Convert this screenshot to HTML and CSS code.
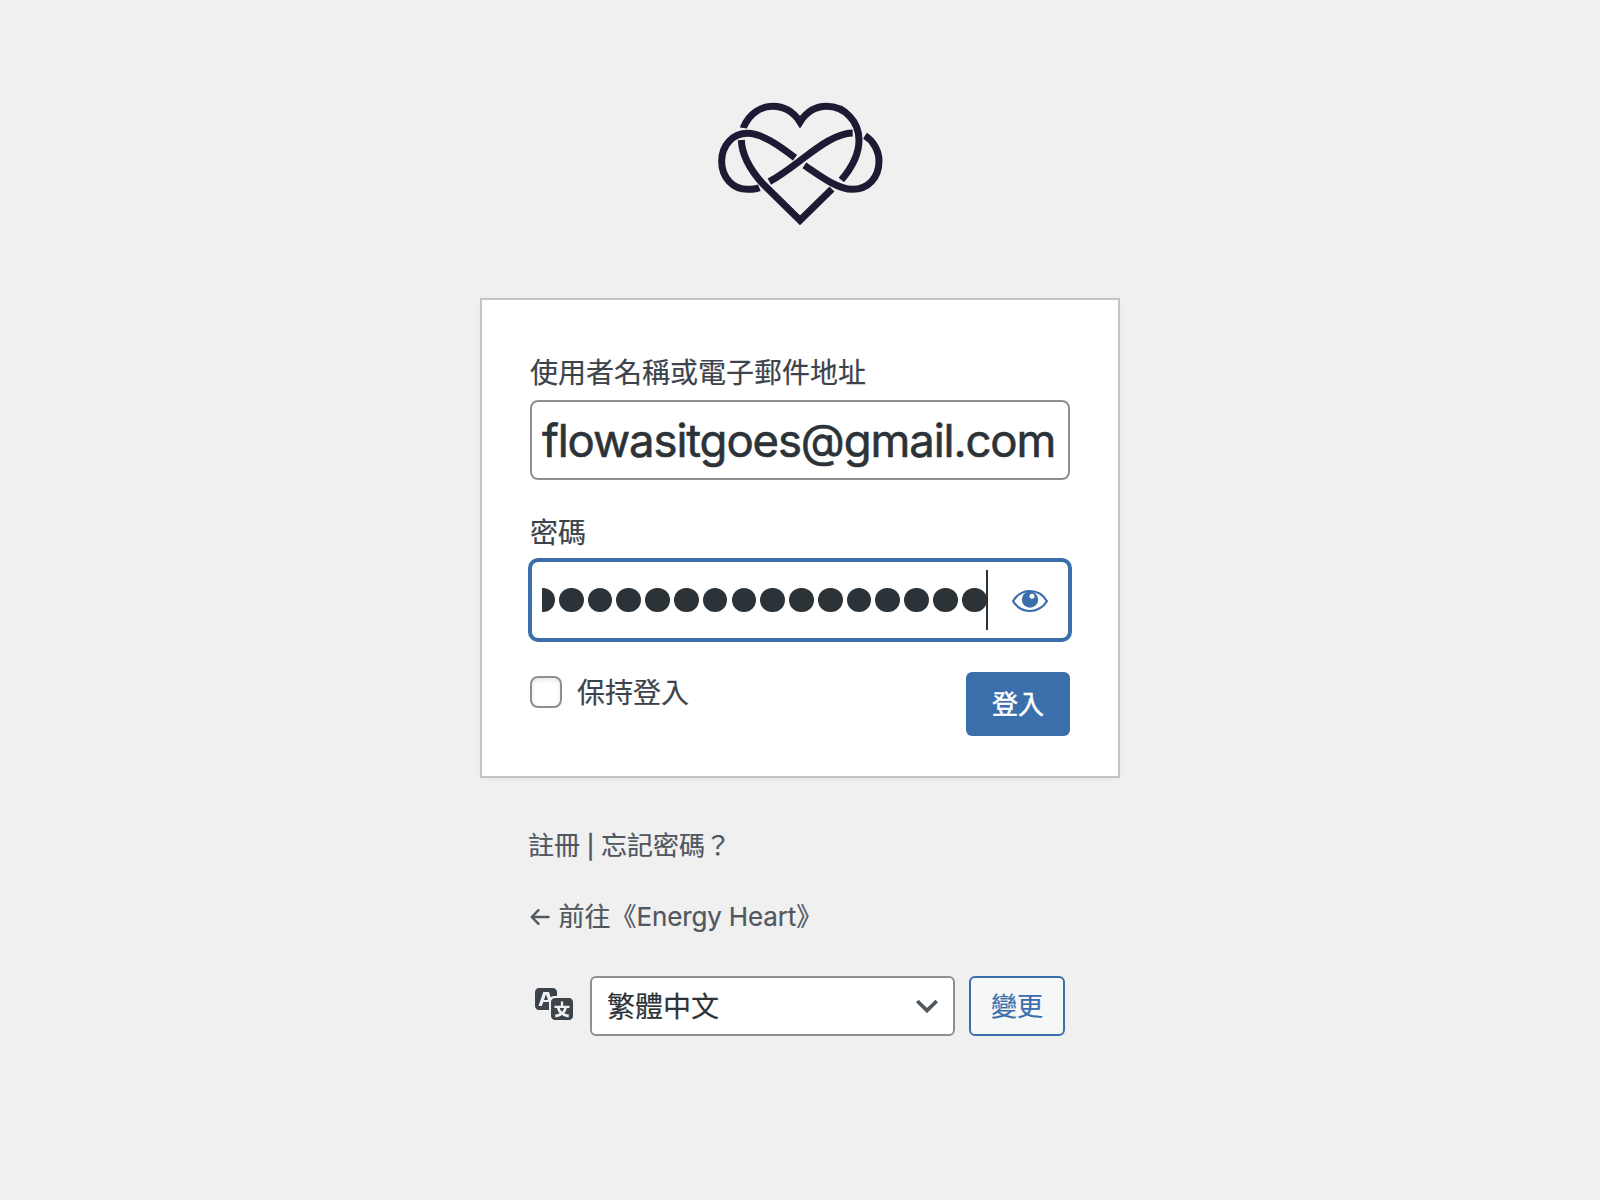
FILE: index.html
```html
<!DOCTYPE html>
<html lang="zh-Hant">
<head>
<meta charset="utf-8">
<title>登入</title>
<link rel="stylesheet" href="styles.css">
</head>
<body>
<main class="login">
  <h1 class="logo">
    <svg viewBox="0 0 600 450" width="200" height="150" fill="none" stroke="#201933" stroke-width="21" stroke-miterlimit="8" aria-label="Energy Heart">
      <path d="M130.500 114L131 111C148 70 183 49 218 49C253 49 282 68 300 96C318 68 345 49 380 49C435 49 477 95 477 150C477 195 454 235 424 270"/>
      <path d="M124 150C126 200 155 245 190 283L300 391L396 297"/>
      <path d="M178 293C168 297 155 298 143 298C98 298 65 262 65 214C65 166 98 130 143 130C185 130 235 165 285 203"/>
      <path d="M208 275C240 257 270 235 300 212C350 175 405 130 458 129"/>
      <path d="M313 226C350 250 410 298 457 298C505 298 537 262 537 214C537 182 520 153 495 137"/>
    </svg>
  </h1>

  <form class="card">
    <label class="label">使用者名稱或電子郵件地址</label>
    <div class="field"><span class="email">flowasitgoes@gmail.com</span></div>

    <label class="label label-pass">密碼</label>
    <div class="field field-focus">
      <span class="dots"><i></i><i></i><i></i><i></i><i></i><i></i><i></i><i></i><i></i><i></i><i></i><i></i><i></i><i></i><i></i><i></i></span>
      <span class="caret"></span>
      <svg class="eye" viewBox="0 0 36 24" width="36" height="24">
        <path d="M1 12.200C5 5.500 11 2 18 2S31 5.500 35 12.200C31 18.500 25 22 18 22S5 18.500 1 12.200Z" fill="none" stroke="#3a6fac" stroke-width="2.200"/>
        <circle cx="18" cy="10.500" r="8.200" fill="#3a6fac"/>
        <circle cx="20" cy="7.300" r="2.500" fill="#fff"/>
      </svg>
    </div>

    <div class="actions">
      <span class="checkbox"></span>
      <span class="remember">保持登入</span>
      <span class="submit">登入</span>
    </div>
  </form>

  <p class="nav">註冊<span class="bar">|</span>忘記密碼？</p>
  <p class="back"><svg class="arrow" viewBox="0 0 20 18" width="20" height="18" fill="none" stroke="#50575e" stroke-width="2.400" stroke-linecap="round" stroke-linejoin="round"><path d="M18.500 9H2M8.500 2.200L1.700 9L8.500 15.800"/></svg><span class="back-text">前往《<span class="site">Energy Heart</span>》</span></p>

  <div class="language">
    <svg class="translate" viewBox="0 0 20 20" width="40" height="40" fill="#3c434a"><path d="M11 7H9.490c-.63 0-1.250.3-1.590.7L7 5H4.130l-2.390 7h1.690l.74-2H7v4H2c-1.100 0-2-.9-2-2V5c0-1.100.9-2 2-2h7c1.100 0 2 .9 2 2v2zM6.510 9H4.490l1-2.930zM10 8h7c1.100 0 2 .9 2 2v7c0 1.100-.9 2-2 2h-7c-1.100 0-2-.9-2-2v-7c0-1.100.9-2 2-2zm7.250 5v-1.080h-3.170V9.750h-1.160v2.170H9.750V13h1.280c.11.85.56 1.850 1.280 2.620-.87.36-1.890.62-2.310.62-.01.02.22.97.2 1.460.84 0 2.210-.5 3.280-1.150 1.090.65 2.480 1.150 3.340 1.150-.02-.49.2-1.440.2-1.460-.43 0-1.490-.27-2.380-.63.7-.77 1.140-1.770 1.250-2.610h1.360zm-3.810 1.930c-.5-.46-.85-1.130-1.010-1.930h2.090c-.17.8-.51 1.470-1 1.930l-.04.03s-.03-.02-.04-.03z"/></svg>
    <div class="select">
      <span class="select-value">繁體中文</span>
      <svg viewBox="0 0 24 14" width="24" height="14" fill="none" stroke="#50575e" stroke-width="3.800"><path d="M2.300 2L12 11.500L21.700 2"/></svg>
    </div>
    <span class="change">變更</span>
  </div>
</main>
</body>
</html>
```
FILE: styles.css
```css
* { box-sizing: border-box; }

body {
  margin: 0;
  background: #f0f0f0;
  color: #3c434a;
  font-family: Inter, "Noto Sans CJK TC", sans-serif;
  -webkit-text-stroke: .2px currentColor;
}

.login {
  width: 640px;
  margin: 0 auto;
  padding-top: 90px;
}

.logo {
  display: flex;
  justify-content: center;
  margin: 0 0 58px;
}

.card {
  display: block;
  height: 480px;
  padding: 52px 48px 0;
  background: #fff;
  border: 2px solid #c3c4c9;
  box-shadow: 0 2px 6px rgba(0, 0, 0, .04);
}

.label {
  display: block;
  height: 42px;
  margin-bottom: 6px;
  font-size: 28px;
  line-height: 43px;
  white-space: nowrap;
}

.label-pass { margin-top: 32px; }

.field {
  display: flex;
  align-items: center;
  height: 80px;
  padding: 0 10px;
  background: #fff;
  border: 2px solid #8c8f94;
  border-radius: 8px;
  color: #2c3338;
}

.field-focus {
  border-color: #3a6fac;
  box-shadow: 0 0 0 2px #3a6fac;
}

.email {
  padding-top: 2px;
  font-size: 45.500px;
  line-height: 60px;
  letter-spacing: -1.120px;
  white-space: nowrap;
  -webkit-text-stroke-width: .6px;
}

.dots {
  display: flex;
  justify-content: flex-end;
  gap: 4.100px;
  width: 444.500px;
  overflow: hidden;
}

.dots i {
  flex: none;
  width: 24.700px;
  height: 24.700px;
  border-radius: 50%;
  background: #2c3338;
}

.caret {
  width: 2px;
  height: 60px;
  margin-left: -.5px;
  background: #2c3338;
}

.eye { margin-left: 24px; margin-top: 2px; }

.actions {
  display: flex;
  align-items: flex-start;
  margin-top: 32px;
}

.checkbox {
  width: 32px;
  height: 32px;
  margin-top: 4px;
  border: 2px solid #8c8f94;
  border-radius: 8px;
  background: #fff;
  box-shadow: inset 0 2px 4px rgba(0, 0, 0, .1);
}

.remember {
  margin-left: 15px;
  font-size: 28px;
  line-height: 43px;
}

.submit {
  width: 104px;
  height: 64px;
  margin-left: auto;
  border-radius: 6px;
  background: #3a6fac;
  color: #fff;
  font-size: 26px;
  line-height: 66px;
  text-align: center;
  -webkit-text-stroke-width: .5px;
}

.nav, .back {
  margin: 0;
  padding-left: 48px;
  color: #50575e;
  font-size: 26px;
  line-height: 40px;
  white-space: nowrap;
}

.nav { padding-top: 48px; }

.bar {
  display: inline-block;
  width: 21px;
  font-size: 23px;
  line-height: 30px;
  text-align: center;
  -webkit-text-stroke-width: .6px;
}

.back {
  display: flex;
  align-items: center;
  padding-top: 31px;
}

.arrow { margin: 0 8.500px 0 2px; }

.site { letter-spacing: -.150px; }

.language {
  display: flex;
  align-items: center;
  height: 60px;
  margin-top: 39px;
  padding-left: 55px;
}

.translate { margin-top: -8px; }

.select {
  display: flex;
  align-items: center;
  justify-content: space-between;
  width: 365px;
  height: 60px;
  margin-left: 15px;
  padding: 0 14px 0 15px;
  border: 2px solid #8c8f94;
  border-radius: 6px;
  background: #fff;
  color: #2c3338;
  font-size: 28px;
}

.select-value { padding-bottom: 2px; }

.change {
  width: 96px;
  height: 60px;
  margin-left: 14px;
  border: 2px solid #3a6fac;
  border-radius: 6px;
  background: #f6f7f7;
  color: #3a6fac;
  font-size: 26px;
  line-height: 58px;
  text-align: center;
}
```
